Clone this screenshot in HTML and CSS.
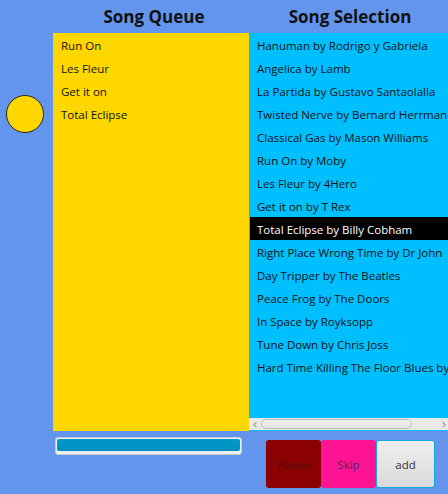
FILE: index.html
```html
<!DOCTYPE html>
<html>
<head>
<meta charset="utf-8">
<link rel="stylesheet" href="styles.css">
</head>
<body>
<div class="app">
  <div class="title queue-title">Song Queue</div>
  <div class="title sel-title">Song Selection</div>

  <div class="side">
    <div class="dot"></div>
  </div>

  <ul class="queue">
    <li>Run On</li>
    <li>Les Fleur</li>
    <li>Get it on</li>
    <li>Total Eclipse</li>
  </ul>

  <div class="selection">
    <ul class="songs">
      <li>Hanuman by Rodrigo y Gabriela</li>
      <li>Angelica by Lamb</li>
      <li>La Partida by Gustavo Santaolalla</li>
      <li>Twisted Nerve by Bernard Herrmann</li>
      <li>Classical Gas by Mason Williams</li>
      <li>Run On by Moby</li>
      <li>Les Fleur by 4Hero</li>
      <li>Get it on by T Rex</li>
      <li class="selected">Total Eclipse by Billy Cobham</li>
      <li>Right Place Wrong Time by Dr John</li>
      <li>Day Tripper by The Beatles</li>
      <li>Peace Frog by The Doors</li>
      <li>In Space by Royksopp</li>
      <li>Tune Down by Chris Joss</li>
      <li>Hard Time Killing The Floor Blues by Chris Thomas King</li>
    </ul>
    <div class="hscroll">
      <span class="arrow">&lsaquo;</span>
      <div class="thumb"></div>
      <span class="arrow right">&rsaquo;</span>
    </div>
  </div>

  <div class="progress-cell">
    <div class="progress"><div class="bar"></div></div>
  </div>

  <div class="buttons">
    <button class="btn pause">Pause</button>
    <button class="btn skip">Skip</button>
    <button class="btn add">add</button>
  </div>
</div>
</body>
</html>
```

FILE: styles.css
```css
html, body {
  margin: 0;
  padding: 0;
  width: 448px;
  height: 494px;
  overflow: hidden;
  background: #6495ED;
  font-family: "Open Sans", "Noto Sans", sans-serif;
}

.app {
  display: grid;
  grid-template-columns: 53px 196px 199px;
  grid-template-rows: 33px 398px auto;
  height: 494px;
}

.title {
  font-weight: bold;
  font-size: 17px;
  color: #111;
  text-align: center;
  line-height: 33px;
  white-space: nowrap;
}

.queue-title { grid-column: 2; grid-row: 1; padding-left: 6px; }
.sel-title { grid-column: 3; grid-row: 1; padding-left: 3px; }

.side { grid-column: 1; grid-row: 2; }

.dot {
  width: 36px;
  height: 36px;
  margin: 62px 0 0 6px;
  border-radius: 50%;
  background: #FFD700;
  border: 1px solid #2a2a10;
}

ul {
  list-style: none;
  margin: 0;
  padding: 0;
}

li {
  height: 22px;
  padding-top: 1px;
  line-height: 23px;
  padding-left: 8px;
  font-size: 11.5px;
  color: #111;
  white-space: nowrap;
}

.queue {
  grid-column: 2;
  grid-row: 2;
  background: #FFD700;
}

.selection {
  grid-column: 3;
  grid-row: 2;
  background: #00BFFF;
  display: flex;
  flex-direction: column;
  overflow: hidden;
}

.songs {
  flex: 1;
  overflow: hidden;
}

.songs li.selected {
  background: #000;
  color: #fff;
  margin-left: 1px;
  padding-left: 7px;
}

.hscroll {
  height: 12px;
  margin-bottom: 1px;
  background: #E9E9E9;
  display: flex;
  align-items: center;
}

.arrow {
  width: 12px;
  text-align: center;
  color: #9a9a9a;
  font-size: 14px;
  line-height: 12px;
  font-family: "DejaVu Sans", sans-serif;
}

.arrow.right {
  margin-left: auto;
  width: 8px;
}

.thumb {
  width: 149px;
  height: 8px;
  border: 1px solid #BDBDBD;
  border-radius: 5px;
  background: linear-gradient(#f2f2f2, #e2e2e2);
}

.progress-cell {
  grid-column: 2;
  grid-row: 3;
}

.progress {
  margin: 6px 0 0 2px;
  width: 183px;
  height: 14px;
  padding: 1px;
  border: 1px solid #C7CBD3;
  border-radius: 3px;
  background: #EDEFF2;
}

.bar {
  height: 12px;
  border-radius: 2px;
  background: linear-gradient(#0099C9, #0090C0);
}

.buttons {
  grid-column: 3;
  grid-row: 3;
  display: flex;
  align-items: flex-start;
  padding: 9px 0 0 17px;
}

.btn {
  height: 48px;
  border: none;
  border-radius: 3px;
  font-family: "Open Sans", "Noto Sans", sans-serif;
  font-size: 11.5px;
  padding: 0;
  color: #333;
}

.pause {
  width: 55px;
  background: #8B0000;
  color: #4a1414;
}

.skip {
  width: 55px;
  background: #FF1493;
  color: #4a2458;
}

.add {
  width: 59px;
  background: linear-gradient(#EFEFEF, #DADADA);
  border: 1px solid #12A8DC;
  color: #333;
}
```
